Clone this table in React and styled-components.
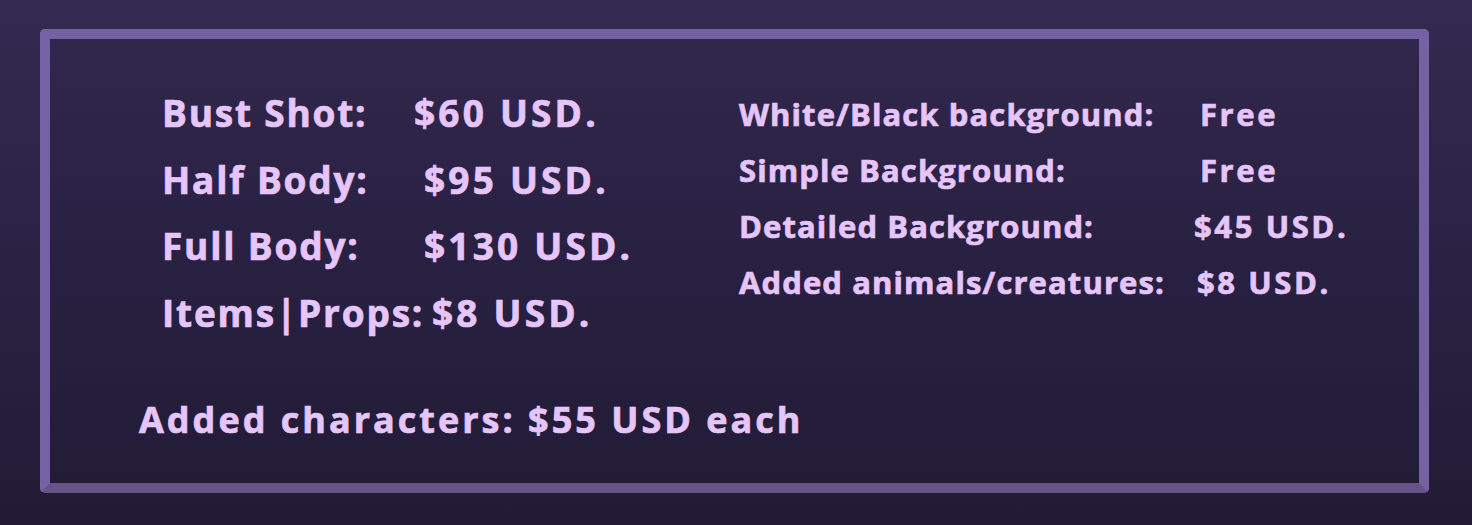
import React from "react";
import styled, { createGlobalStyle } from "styled-components";

const GlobalStyle = createGlobalStyle`
  html, body {
    margin: 0;
    padding: 0;
  }
  body {
    width: 1472px;
    height: 525px;
    overflow: hidden;
    background: linear-gradient(180deg, #342a51 0%, #2a2243 50%, #211b35 100%);
    font-family: "Open Sans", "DejaVu Sans", sans-serif;
  }
`;

const leftRows = [
  { label: "Bust Shot:", price: "$60 USD.", indent: 0 },
  { label: "Half Body:", price: "$95 USD.", indent: 10 },
  { label: "Full Body:", price: "$130 USD.", indent: 10 },
  { label: "Items|Props:", price: "$8 USD.", indent: 18 },
];

const rightRows = [
  { label: "White/Black background:", price: "Free", indent: 6 },
  { label: "Simple Background:", price: "Free", indent: 6 },
  { label: "Detailed Background:", price: "$45 USD.", indent: 0 },
  { label: "Added animals/creatures:", price: "$8 USD.", indent: 3 },
];

export default function App() {
  return (
    <>
      <GlobalStyle />
      <Frame>
        <Columns>
          <PriceList $width={577} $offset={0}>
            {leftRows.map((r) => (
              <Row key={r.label} $size={37} $height={66.7}>
                <Label $width={252} $spacing={1.8}>{r.label}</Label>
                <Price $indent={r.indent} $spacing={3.2}>{r.price}</Price>
              </Row>
            ))}
          </PriceList>
          <PriceList $offset={7}>
            {rightRows.map((r) => (
              <Row key={r.label} $size={31} $height={56}>
                <Label $width={455} $spacing={1.1}>{r.label}</Label>
                <Price $indent={r.indent} $spacing={2.6}>{r.price}</Price>
              </Row>
            ))}
          </PriceList>
        </Columns>
        <Extra>Added characters: $55 USD each</Extra>
      </Frame>
    </>
  );
}

const Frame = styled.div`
  box-sizing: border-box;
  margin: 29px 0 0 40px;
  width: 1389px;
  height: 464px;
  border: 10px solid #7561a3;
  border-bottom-color: #675487;
  border-radius: 5px;
  background: linear-gradient(180deg, #30274c 0%, #282040 55%, #221c37 100%);
  padding: 40px 0 0 112px;
  color: #e6c5fa;
  -webkit-text-stroke: 0.7px #e6c5fa;
`;

const Columns = styled.div`
  display: flex;
  align-items: flex-start;
`;

const PriceList = styled.div`
  display: flex;
  flex-direction: column;
  width: ${(p) => (p.$width ? `${p.$width}px` : "auto")};
  margin-top: ${(p) => p.$offset}px;
`;

const Row = styled.div`
  display: flex;
  align-items: center;
  height: ${(p) => p.$height}px;
  font-size: ${(p) => p.$size}px;
  font-weight: 700;
  white-space: nowrap;
`;

const Label = styled.span`
  width: ${(p) => p.$width}px;
  letter-spacing: ${(p) => p.$spacing}px;
`;

const Price = styled.span`
  margin-left: ${(p) => p.$indent}px;
  letter-spacing: ${(p) => p.$spacing}px;
`;

const Extra = styled.div`
  margin: 49px 0 0 -23px;
  height: 50px;
  line-height: 50px;
  font-size: 36px;
  font-weight: 700;
  letter-spacing: 3px;
  white-space: nowrap;
`;
